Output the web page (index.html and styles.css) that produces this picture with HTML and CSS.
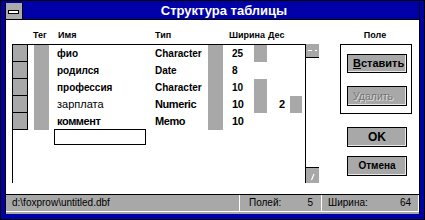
FILE: index.html
```html
<!DOCTYPE html>
<html>
<head>
<meta charset="utf-8">
<link rel="stylesheet" href="styles.css">
</head>
<body>
<div class="frame">
  <div class="win">
    <div class="titlebar">
      <div class="sysmenu"><span class="dash"></span></div>
      <div class="title">Структура таблицы</div>
    </div>
    <div class="content">
      <div class="left">
        <div class="hdr">
          <span class="h-tag">Тег</span><span class="h-name">Имя</span><span class="h-type">Тип</span><span class="h-wid">Ширина</span><span class="h-dec">Дес</span>
        </div>
        <div class="tablewrap">
          <div class="table">
            <div class="row">
              <div class="b"></div><div class="t"></div><div class="n">фио</div><div class="ty">Character</div><div class="tg"></div><div class="w">25</div><div class="wg on"></div><div class="d"></div><div class="dg"></div>
            </div>
            <div class="row">
              <div class="b"></div><div class="t"></div><div class="n">родился</div><div class="ty">Date</div><div class="tg"></div><div class="w">8</div><div class="wg"></div><div class="d"></div><div class="dg"></div>
            </div>
            <div class="row">
              <div class="b"></div><div class="t"></div><div class="n">профессия</div><div class="ty">Character</div><div class="tg"></div><div class="w">10</div><div class="wg on"></div><div class="d"></div><div class="dg"></div>
            </div>
            <div class="row big">
              <div class="b"></div><div class="t"></div><div class="n thin">зарплата</div><div class="ty">Numeric</div><div class="tg"></div><div class="w">10</div><div class="wg on"></div><div class="d">2</div><div class="dg on"></div>
            </div>
            <div class="row big">
              <div class="b"></div><div class="t"></div><div class="n">коммент</div><div class="ty">Memo</div><div class="tg"></div><div class="w">10</div><div class="wg"></div><div class="d"></div><div class="dg"></div>
            </div>
            <div class="editrow"><div class="edit"></div></div>
          </div>
          <div class="scroll">
            <div class="sbtn up"><svg width="13" height="13" viewBox="0 0 13 13"><rect x="2" y="6" width="4" height="1" fill="#fff"/><rect x="9" y="6" width="2" height="1" fill="#fff"/></svg></div>
            <div class="sbtn down"><svg width="13" height="15" viewBox="0 0 13 15"><path d="M5.5 12 L8 6" stroke="#fff" stroke-width="1.2" fill="none"/></svg></div>
          </div>
        </div>
      </div>
      <div class="right">
        <div class="h-field">Поле</div>
        <div class="group">
          <div class="btn ins"><u>В</u>ставить</div>
          <div class="btn del">Удалить</div>
        </div>
        <div class="btn ok">OK</div>
        <div class="btn cancel">Отмена</div>
      </div>
    </div>
    <div class="status">
      <div class="panel p1">d:\foxprow\untitled.dbf</div>
      <div class="panel p2"><span>Полей:</span><span>5</span></div>
      <div class="panel p3"><span>Ширина:</span><span>64</span></div>
    </div>
  </div>
</div>
</body>
</html>
```
FILE: styles.css
```css
html, body {
  margin: 0;
  padding: 0;
  background: #000;
}
body {
  font-family: "Liberation Sans", Arial, sans-serif;
}
.frame {
  width: 425px;
  height: 220px;
  box-sizing: border-box;
  border: 1px solid #000;
  background: #0000a8;
  padding: 2px 4px 5px 4px;
}
.win {
  height: 211px;
  border-left: 1px solid #000;
  border-right: 1px solid #000;
  background: #fff;
  display: flex;
  flex-direction: column;
}
.titlebar {
  height: 16px;
  background: #0000a8;
  border-bottom: 1px solid #000;
  display: flex;
  flex: none;
}
.sysmenu {
  width: 17px;
  height: 16px;
  box-sizing: border-box;
  border-right: 1px solid #000;
  background: #ababab;
  display: flex;
  align-items: center;
}
.dash {
  display: block;
  width: 9px;
  height: 2px;
  margin-left: 2px;
  margin-top: 1px;
  background: #fff;
  border: 1px solid #000;
}
.title {
  flex: 1;
  text-align: center;
  color: #fff;
  font-weight: bold;
  font-size: 13px;
  line-height: 16px;
  padding-left: 6px;
}
.content {
  height: 174px;
  flex: none;
  display: flex;
  padding-left: 6px;
}
.left {
  width: 307px;
}
.hdr {
  height: 24px;
  box-sizing: border-box;
  padding-top: 9px;
  display: flex;
  font-weight: bold;
  font-size: 9px;
  line-height: 12px;
}
.h-tag { margin-left: 21px; width: 25px; }
.h-name { width: 97px; }
.h-type { width: 74px; }
.h-wid { width: 39px; }
.h-dec { width: 30px; }
.tablewrap {
  display: flex;
}
.table {
  width: 294px;
  height: 139px;
  box-sizing: border-box;
  border: 1px solid #000;
  border-bottom: none;
}
.row {
  display: flex;
  height: 17px;
  font-weight: bold;
  font-size: 10px;
  line-height: 17px;
}
.row.big {
  font-size: 11px;
  letter-spacing: -0.4px;
}
.b {
  width: 15px;
  height: 17px;
  box-sizing: border-box;
  border-right: 1px solid #000;
  border-bottom: 1px solid #000;
  background: #a8a8a8;
}
.t {
  margin-left: 6px;
  width: 15px;
  background: #a8a8a8;
}
.n {
  margin-left: 6px;
  width: 100px;
  box-sizing: border-box;
  padding-left: 2px;
}
.n.thin { font-weight: normal; letter-spacing: 0; }
.ty { width: 53px; }
.tg { width: 15px; background: #a8a8a8; }
.w { margin-left: 9px; width: 22px; }
.wg { width: 13px; }
.d { margin-left: 12px; width: 11px; }
.dg { width: 12px; }
.wg.on, .dg.on { background: #a8a8a8; }
.editrow {
  margin-top: -1px;
}
.edit {
  margin-left: 41px;
  width: 92px;
  height: 16px;
  box-sizing: border-box;
  border: 1px solid #000;
}
.scroll {
  width: 13px;
  height: 139px;
  display: flex;
  flex-direction: column;
  justify-content: space-between;
}
.sbtn {
  background: #a8a8a8;
  box-sizing: border-box;
}
.sbtn svg { display: block; }
.up {
  height: 14px;
  border-bottom: 1px solid #000;
}
.down {
  height: 16px;
  border-top: 1px solid #000;
}
.right {
  margin-left: 21px;
  width: 72px;
}
.h-field {
  height: 24px;
  box-sizing: border-box;
  padding-top: 9px;
  text-align: center;
  font-weight: bold;
  font-size: 9px;
  line-height: 12px;
  padding-right: 2px;
}
.group {
  height: 70px;
  box-sizing: border-box;
  border: 1px solid #000;
  padding: 9px 4px 7px 6px;
}
.btn {
  width: 60px;
  height: 20px;
  box-sizing: border-box;
  border: 1px solid #000;
  box-shadow: inset -1px -1px 0 #e8e8e8;
  background: #a8a8a8;
  text-align: center;
  font-weight: bold;
  font-size: 11px;
  line-height: 18px;
}
.ins {
  height: 19px;
  line-height: 17px;
  margin-bottom: 13px;
  text-align: left;
  padding-left: 5px;
}
.del {
  font-weight: normal;
  font-size: 10.5px;
  color: #737373;
  text-shadow: 1px 1px 0 #e0e0e0;
  text-align: left;
  padding-left: 5px;
}
.ok {
  margin-top: 13px;
  margin-left: 7px;
  font-size: 12px;
}
.cancel {
  margin-top: 9px;
  margin-left: 7px;
  font-size: 10px;
}
.status {
  height: 20px;
  box-sizing: border-box;
  border-top: 1px solid #000;
  background: #a8a8a8;
  display: flex;
  flex: none;
  font-size: 10px;
  line-height: 16px;
  color: #000;
}
.panel {
  height: 17px;
  box-sizing: border-box;
  border-right: 1px solid #fff;
  border-bottom: 1px solid #fff;
  display: flex;
  justify-content: space-between;
}
.p1 { width: 234px; padding-left: 6px; }
.p2 { width: 82px; padding-left: 9px; padding-right: 8px; }
.p3 { width: 97px; padding-left: 6px; padding-right: 7px; }
```
